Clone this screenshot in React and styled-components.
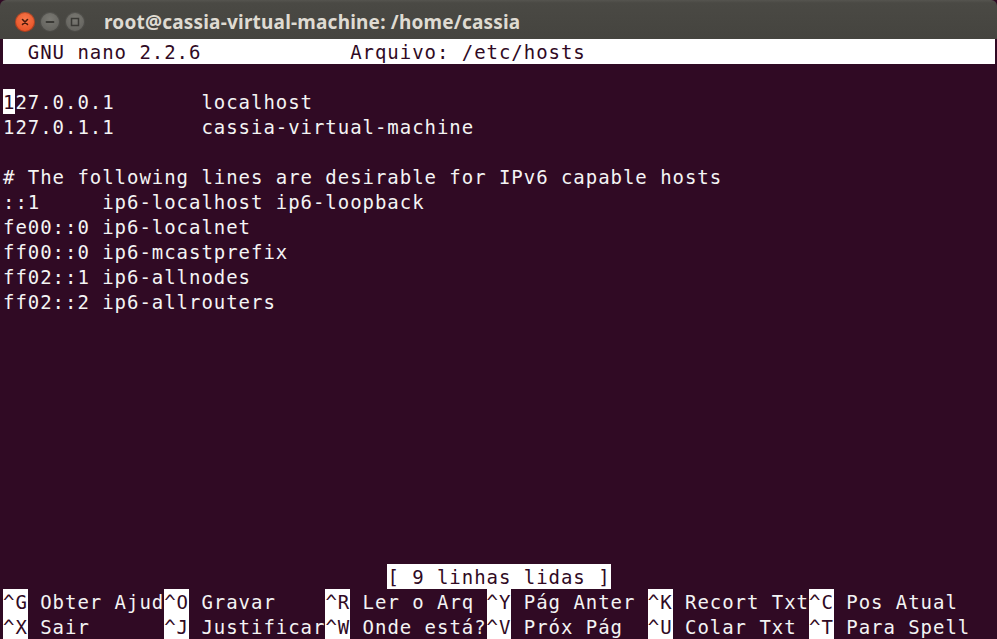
import React from "react";
import styled, { createGlobalStyle } from "styled-components";

const GlobalStyle = createGlobalStyle`
  html, body {
    margin: 0;
    padding: 0;
    background: #300a24;
  }
`;

const Window = styled.div`
  width: 997px;
  height: 639px;
  display: flex;
  flex-direction: column;
  overflow: hidden;
  background: #300a24;
`;

const TitleBar = styled.div`
  height: 39px;
  flex: none;
  display: flex;
  align-items: center;
  padding: 4px 0 0 15px;
  box-sizing: border-box;
  background: linear-gradient(#55544f 0, #4a4944 3px, #45443f 100%);
  border-radius: 6px 6px 0 0;
`;

const Buttons = styled.div`
  display: flex;
  gap: 5px;
  margin-right: 19px;
`;

const WinButton = styled.div`
  width: 20px;
  height: 20px;
  border-radius: 50%;
  display: flex;
  align-items: center;
  justify-content: center;
  background: ${(p) =>
    p.$close
      ? "radial-gradient(circle at 50% 35%, #f7774a, #e2471c)"
      : "radial-gradient(circle at 50% 35%, #7a7973, #5c5b56)"};
  box-shadow: inset 0 0 0 1px rgba(0, 0, 0, 0.25);
`;

const Title = styled.div`
  font-family: "Noto Sans", "DejaVu Sans", sans-serif;
  font-weight: bold;
  font-size: 19px;
  letter-spacing: 0.2px;
  color: #dfdbd2;
  white-space: nowrap;
`;

const Terminal = styled.div`
  flex: 1;
  padding-left: 3px;
  font-family: "DejaVu Sans Mono", monospace;
  font-size: 19px;
  letter-spacing: 0.96px;
  color: #f4f4f4;
  background: #300a24;
`;

const Row = styled.div`
  height: 25px;
  line-height: 27px;
  white-space: pre;
`;

const HeaderRow = styled(Row)`
  width: 992px;
  background: #ffffff;
  color: #300a24;
`;

const Inv = styled.span`
  background: #ffffff;
  color: #300a24;
  display: inline-block;
  vertical-align: top;
  height: 25px;
  line-height: 27px;
`;

const lines = [
  null,
  "127.0.0.1       localhost",
  "127.0.1.1       cassia-virtual-machine",
  "",
  "# The following lines are desirable for IPv6 capable hosts",
  "::1     ip6-localhost ip6-loopback",
  "fe00::0 ip6-localnet",
  "ff00::0 ip6-mcastprefix",
  "ff02::1 ip6-allnodes",
  "ff02::2 ip6-allrouters",
];

const shortcuts = [
  [
    ["^G", " Obter Ajud"],
    ["^O", " Gravar    "],
    ["^R", " Ler o Arq "],
    ["^Y", " Pág Anter "],
    ["^K", " Recort Txt"],
    ["^C", " Pos Atual"],
  ],
  [
    ["^X", " Sair      "],
    ["^J", " Justificar"],
    ["^W", " Onde está?"],
    ["^V", " Próx Pág  "],
    ["^U", " Colar Txt "],
    ["^T", " Para Spell"],
  ],
];

const Close = () => (
  <svg width="10" height="10" viewBox="0 0 10 10">
    <path d="M2.5 2.5 L7.5 7.5 M7.5 2.5 L2.5 7.5" stroke="#4a1a0c" strokeWidth="1.6" strokeLinecap="round" />
  </svg>
);

const Minimize = () => (
  <svg width="10" height="10" viewBox="0 0 10 10">
    <path d="M1.5 5 H8.5" stroke="#3a3935" strokeWidth="1.8" strokeLinecap="round" />
  </svg>
);

const Maximize = () => (
  <svg width="10" height="10" viewBox="0 0 10 10">
    <rect x="1.5" y="1.5" width="7" height="7" fill="none" stroke="#3a3935" strokeWidth="1.5" />
  </svg>
);

export default function App() {
  const blank = 24 - 1 - lines.length - 3;
  return (
    <>
      <GlobalStyle />
      <Window>
        <TitleBar>
          <Buttons>
            <WinButton $close>
              <Close />
            </WinButton>
            <WinButton>
              <Minimize />
            </WinButton>
            <WinButton>
              <Maximize />
            </WinButton>
          </Buttons>
          <Title>root@cassia-virtual-machine: /home/cassia</Title>
        </TitleBar>
        <Terminal>
          <HeaderRow>{"  GNU nano 2.2.6            Arquivo: /etc/hosts"}</HeaderRow>
          {lines.map((line, i) =>
            line === null ? (
              <Row key={i}> </Row>
            ) : i === 1 ? (
              <Row key={i}>
                <Inv>1</Inv>
                {line.slice(1)}
              </Row>
            ) : (
              <Row key={i}>{line || " "}</Row>
            )
          )}
          {Array.from({ length: blank }).map((_, i) => (
            <Row key={`b${i}`}> </Row>
          ))}
          <Row>
            {" ".repeat(31)}
            <Inv>[ 9 linhas lidas ]</Inv>
          </Row>
          {shortcuts.map((row, r) => (
            <Row key={`s${r}`}>
              {row.map(([key, label]) => (
                <React.Fragment key={key}>
                  <Inv>{key}</Inv>
                  {label}
                </React.Fragment>
              ))}
            </Row>
          ))}
        </Terminal>
      </Window>
    </>
  );
}
